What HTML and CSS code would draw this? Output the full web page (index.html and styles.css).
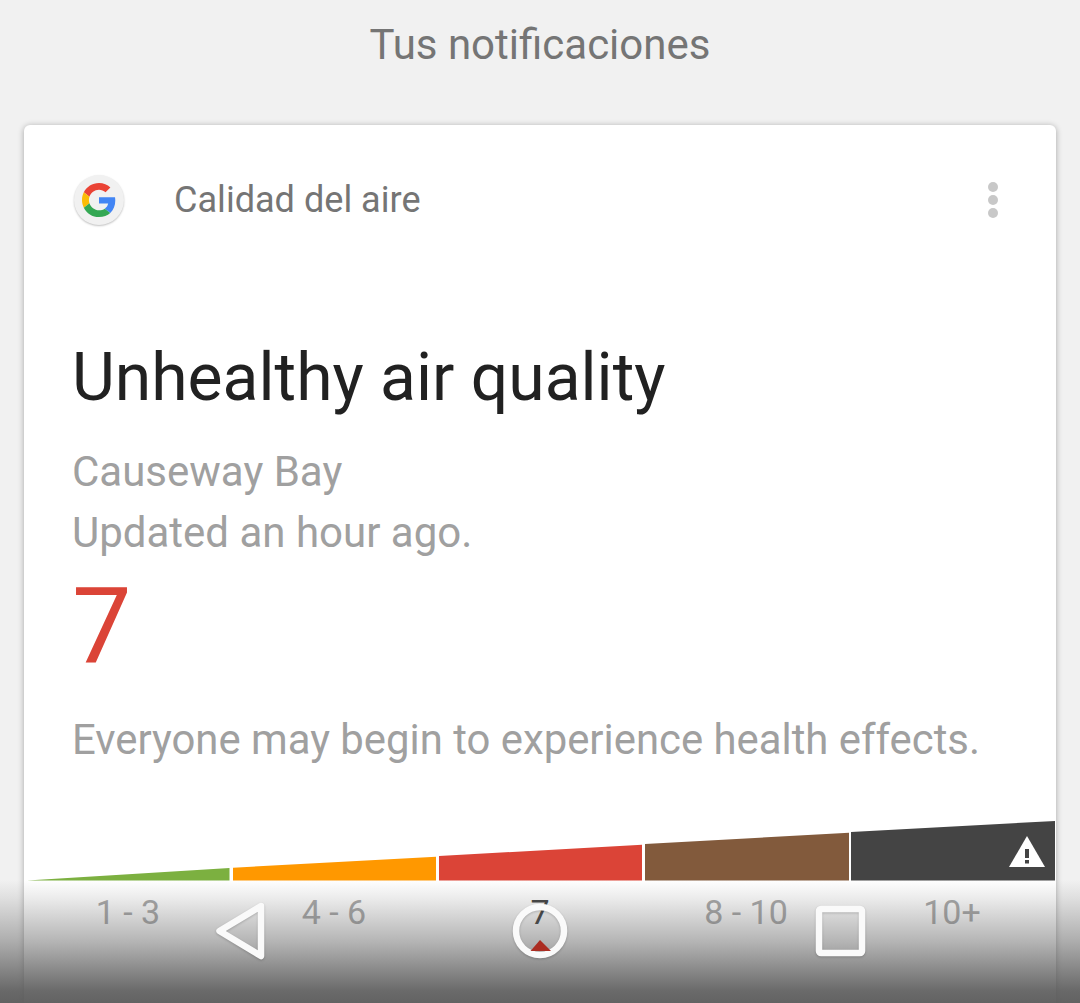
FILE: index.html
```html
<!DOCTYPE html>
<html lang="es">

<head>
    <meta charset="UTF-8">
    <title>Tus notificaciones</title>
    <link rel="stylesheet" href="styles.css">
</head>

<body>
    <h1 class="page-title">Tus notificaciones</h1>

    <div class="card">
        <div class="card-head">
            <span class="logo">
                <svg width="34" height="34" viewBox="0 0 48 48">
                    <path fill="#EA4335" d="M24 9.5c3.54 0 6.71 1.22 9.21 3.6l6.85-6.85C35.9 2.38 30.47 0 24 0 14.62 0 6.51 5.38 2.56 13.22l7.98 6.19C12.43 13.72 17.74 9.5 24 9.5z"/>
                    <path fill="#4285F4" d="M46.98 24.55c0-1.57-.15-3.09-.38-4.55H24v9.02h12.94c-.58 2.96-2.26 5.48-4.78 7.18l7.73 6c4.51-4.18 7.09-10.36 7.09-17.65z"/>
                    <path fill="#FBBC05" d="M10.53 28.59c-.48-1.45-.76-2.99-.76-4.59s.27-3.14.76-4.59l-7.98-6.19C.92 16.46 0 20.12 0 24c0 3.88.92 7.54 2.56 10.78l7.97-6.19z"/>
                    <path fill="#34A853" d="M24 48c6.48 0 11.93-2.13 15.89-5.81l-7.73-6c-2.15 1.45-4.92 2.3-8.16 2.3-6.26 0-11.57-4.22-13.47-9.91l-7.98 6.19C6.51 42.62 14.62 48 24 48z"/>
                </svg>
            </span>
            <span class="source">Calidad del aire</span>
            <span class="menu"><i></i><i></i><i></i></span>
        </div>

        <h2 class="headline">Unhealthy air quality</h2>
        <p class="info place">Causeway Bay</p>
        <p class="info">Updated an hour ago.</p>
        <div class="level">7</div>
        <p class="info advice">Everyone may begin to experience health effects.</p>

        <div class="scale">
            <svg class="wedge" width="1032" height="60" viewBox="0 0 1032 60">
                <polygon fill="#7cb040" points="3,59.500 205.500,47 205.500,59.500"/>
                <polygon fill="#ff9800" points="209,46.700 412,35.700 412,59.500 209,59.500"/>
                <polygon fill="#db4437" points="415,35 618,23.700 618,59.500 415,59.500"/>
                <polygon fill="#825a3c" points="621,23 825,11.700 825,59.500 621,59.500"/>
                <polygon fill="#444444" points="827,11 1031,0 1031,59.500 827,59.500"/>
                <path fill="#fff" d="M985 46 L1003 15 L1021 46 Z"/>
                <rect x="1001" y="28" width="4" height="9" fill="#444"/>
                <rect x="1001" y="39" width="4" height="3.500" fill="#444"/>
            </svg>
            <div class="labels">
                <span>1 - 3</span>
                <span>4 - 6</span>
                <span class="current">7</span>
                <span>8 - 10</span>
                <span>10+</span>
            </div>
        </div>
    </div>

    <div class="navbar">
        <svg width="1080" height="123" viewBox="0 0 1080 123">
            <path class="nav-icon" d="M261 26 L219.500 51 L261 76 Z"/>
            <circle class="nav-icon" cx="540" cy="51" r="24"/>
            <path fill="#ab2d22" d="M530.500 71 L540 60 L551 71 Z"/>
            <rect class="nav-icon" x="819" y="29" width="43" height="44" rx="2"/>
        </svg>
    </div>
</body>

</html>
```

FILE: styles.css
```css
body {
    margin: 0;
    height: 1003px;
    overflow: hidden;
    position: relative;
    background-color: #f1f1f1;
    font-family: Roboto, "Liberation Sans", sans-serif;
}

.page-title {
    margin: 0;
    padding-top: 21px;
    height: 125px;
    box-sizing: border-box;
    text-align: center;
    font-size: 42px;
    line-height: 48px;
    font-weight: 400;
    color: #757575;
}

.card {
    margin: 0 24px;
    height: 880px;
    background-color: #fff;
    border-radius: 6px 6px 0 0;
    box-shadow: 0 1px 6px rgba(0, 0, 0, 0.32);
}

.card-head {
    display: flex;
    align-items: center;
    height: 150px;
    padding: 0 58px 0 50px;
}

.logo {
    width: 50px;
    height: 50px;
    margin-right: 50px;
    border-radius: 50%;
    background-color: #f1f1f1;
    box-shadow: 0 1px 2px rgba(0, 0, 0, 0.25);
    display: flex;
    align-items: center;
    justify-content: center;
}

.source {
    flex: 1;
    font-size: 36.100px;
    color: #757575;
}

.menu {
    display: flex;
    flex-direction: column;
    gap: 3.300px;
}

.menu i {
    display: block;
    width: 10px;
    height: 10px;
    border-radius: 50%;
    background-color: #c8c8c8;
}

.headline {
    margin: 65px 0 0 48px;
    font-size: 66px;
    line-height: 76px;
    font-weight: 400;
    color: #212121;
}

.info {
    margin: 0 0 0 48px;
    font-size: 42px;
    line-height: 61px;
    color: #a0a0a0;
}

.place {
    margin-top: 25px;
}

.level {
    margin: 0 0 0 48px;
    height: 128px;
    font-size: 106px;
    line-height: 126px;
    font-weight: 400;
    color: #db4437;
}

.advice {
    margin-top: 18px;
    font-size: 41.850px;
}

.scale {
    margin-top: 51px;
}

.wedge {
    display: block;
}

.labels {
    display: flex;
    padding: 9px 0 0 1px;
}

.labels span {
    width: 206px;
    text-align: center;
    font-size: 34px;
    line-height: 44px;
    color: #a8a8a8;
}

.labels .current {
    color: #424242;
}

.navbar {
    position: absolute;
    left: 0;
    bottom: 0;
    width: 1080px;
    height: 123px;
    background: linear-gradient(to bottom, rgba(90, 90, 90, 0) 0%, rgba(90, 90, 90, 0.12) 15%, rgba(90, 90, 90, 0.45) 50%, rgba(90, 90, 90, 0.9) 90%, rgba(90, 90, 90, 0.95) 100%);
}

.navbar svg {
    display: block;
}

.nav-icon {
    fill: none;
    stroke: #fafafa;
    stroke-width: 6.500;
    stroke-linejoin: round;
    filter: drop-shadow(0 1px 1px rgba(0, 0, 0, 0.2));
}
```
